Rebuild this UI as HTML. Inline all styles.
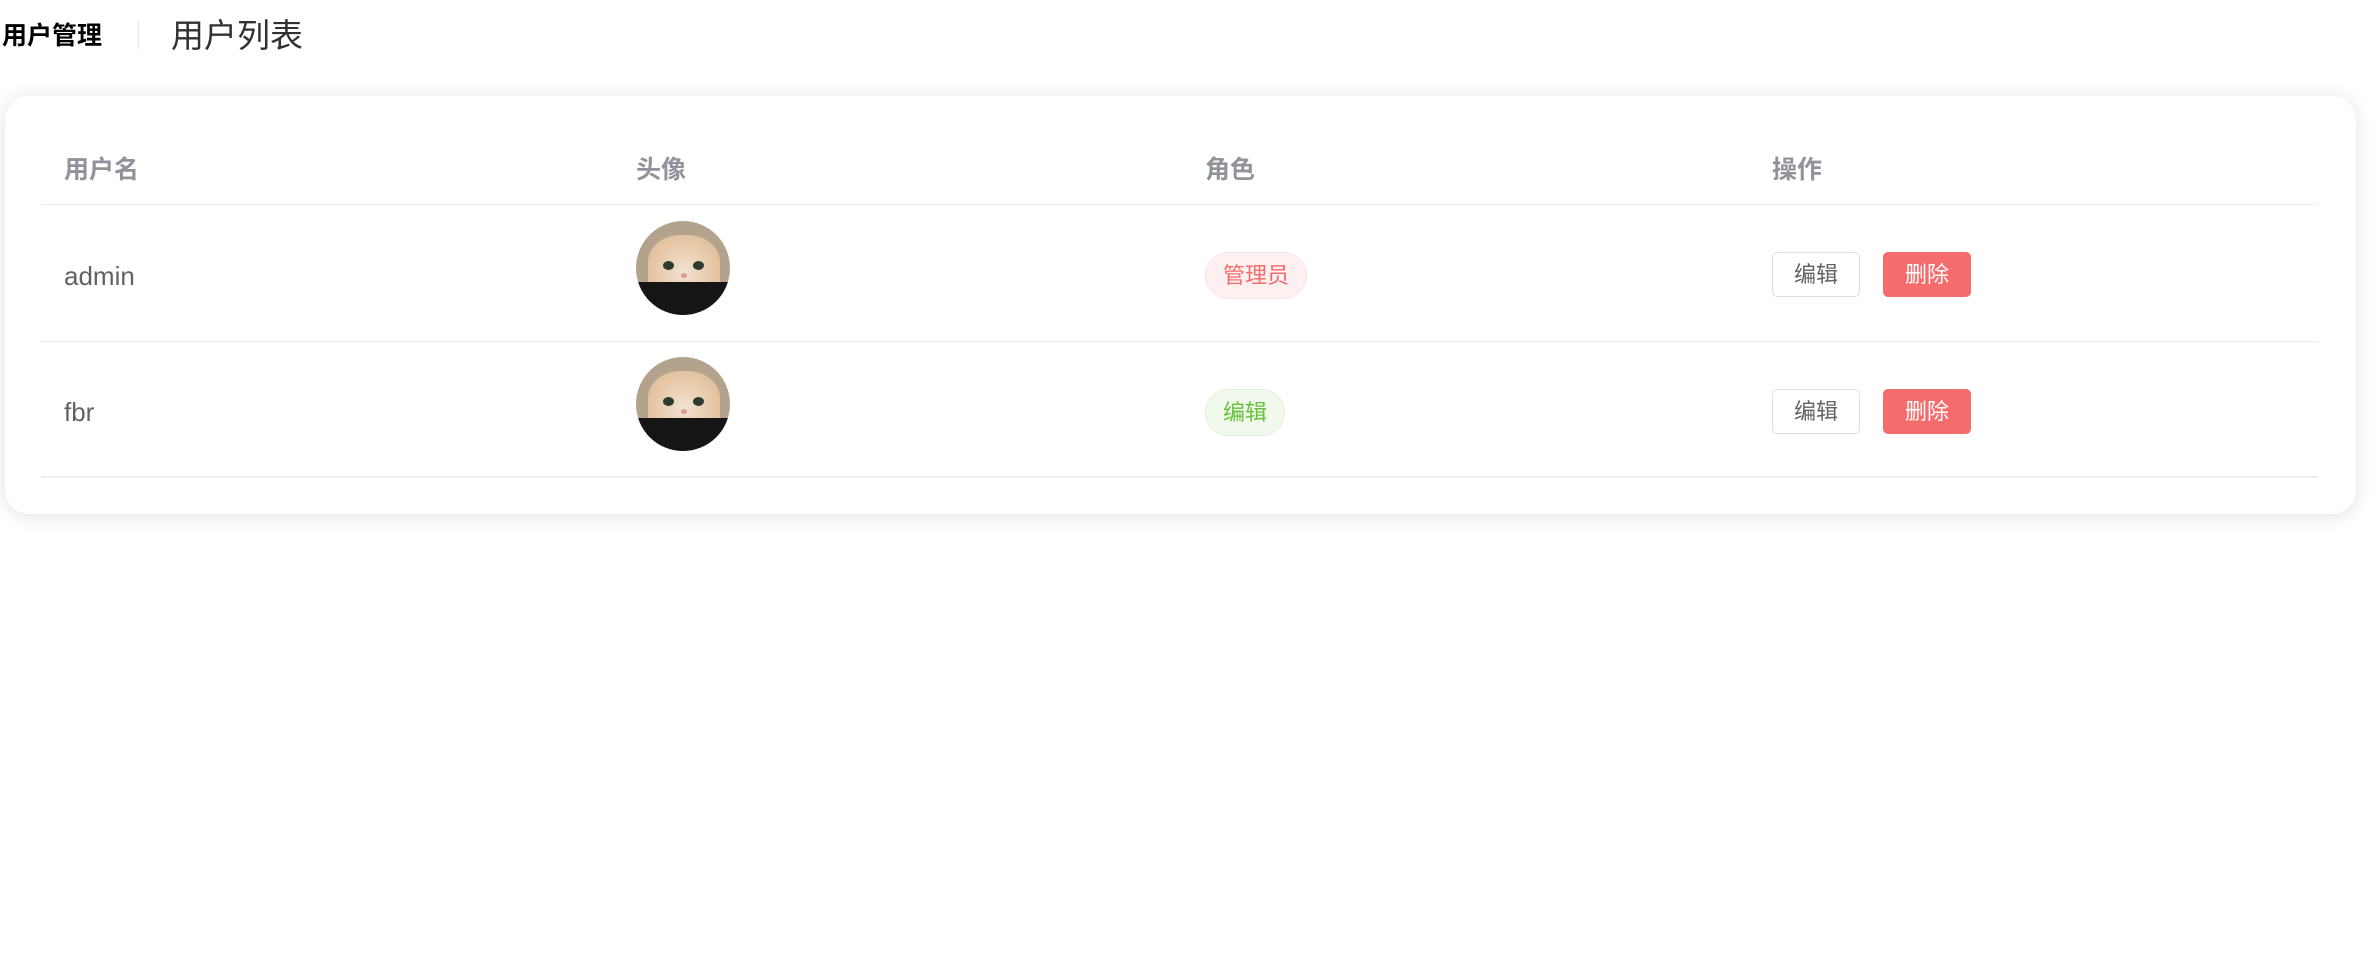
<!DOCTYPE html>
<html><head><meta charset="utf-8"><style>
*{box-sizing:border-box;margin:0;padding:0}
body{width:2378px;height:957px;background:#fff;font-family:"Liberation Sans","Noto Sans CJK SC",sans-serif;position:relative;overflow:hidden}
.a{position:absolute}
.t1{left:2px;top:19px;font-size:25px;font-weight:bold;color:#000;line-height:34px}
.div{left:138px;top:21px;width:1px;height:28px;background:#e4e7ed}
.t2{left:171px;top:16px;font-size:33px;color:#303133;line-height:40px}
.card{left:5px;top:96px;width:2351px;height:418px;border-radius:24px;box-shadow:0 2px 18px rgba(0,0,0,0.12);background:#fff}
.line{left:41px;width:2277px;height:2px;background:#ebeef5}
.h{top:153px;font-size:25px;font-weight:bold;color:#909399;line-height:34px}
.c{font-size:26px;color:#606266;line-height:34px}
.av{width:94px;height:94px;border-radius:50%;overflow:hidden;background:#b3a38c}
.av .face{position:absolute;left:12px;top:14px;width:72px;height:60px;border-radius:45% 45% 20% 20%;background:radial-gradient(ellipse at 50% 60%,#f1e2d2 0%,#e8c9a8 55%,#d9b590 100%)}
.av .e1,.av .e2{position:absolute;top:40px;width:11px;height:9px;border-radius:50%;background:#2e3a2e}
.av .e1{left:27px}.av .e2{left:57px}
.av .n{position:absolute;left:45px;top:52px;width:6px;height:5px;border-radius:50%;background:#e09a90}
.av .b{position:absolute;left:0;top:61px;width:94px;height:40px;background:#151515}
.tag{height:47px;border-radius:24px;font-size:22px;line-height:45px;padding:0 17px;border:1px solid}
.btn{height:45px;width:88px;border-radius:5px;font-size:22px;line-height:43px;text-align:center;border:1px solid}
</style></head><body>
<div class="a t1">用户管理</div>
<div class="a div"></div>
<div class="a t2">用户列表</div>
<div class="a card"></div>
<div class="a h" style="left:64px">用户名</div>
<div class="a h" style="left:636px">头像</div>
<div class="a h" style="left:1205px">角色</div>
<div class="a h" style="left:1772px">操作</div>
<div class="a line" style="top:204px;height:1px"></div>
<div class="a line" style="top:341px;height:1px"></div>
<div class="a line" style="top:476px"></div>

<div class="a c" style="left:64px;top:259px">admin</div>
<div class="a av" style="left:636px;top:221px"><div class="face"></div><div class="e1"></div><div class="e2"></div><div class="n"></div><div class="b"></div></div>
<div class="a tag" style="left:1205px;top:252px;background:#fef0f0;border-color:#fde2e2;color:#f56c6c">管理员</div>
<div class="a btn" style="left:1772px;top:252px;background:#fff;border-color:#dcdfe6;color:#606266">编辑</div>
<div class="a btn" style="left:1883px;top:252px;background:#f56c6c;border-color:#f56c6c;color:#fff">删除</div>

<div class="a c" style="left:64px;top:395px">fbr</div>
<div class="a av" style="left:636px;top:357px"><div class="face"></div><div class="e1"></div><div class="e2"></div><div class="n"></div><div class="b"></div></div>
<div class="a tag" style="left:1205px;top:389px;background:#f0f9eb;border-color:#e1f3d8;color:#67c23a">编辑</div>
<div class="a btn" style="left:1772px;top:389px;background:#fff;border-color:#dcdfe6;color:#606266">编辑</div>
<div class="a btn" style="left:1883px;top:389px;background:#f56c6c;border-color:#f56c6c;color:#fff">删除</div>
</body></html>
